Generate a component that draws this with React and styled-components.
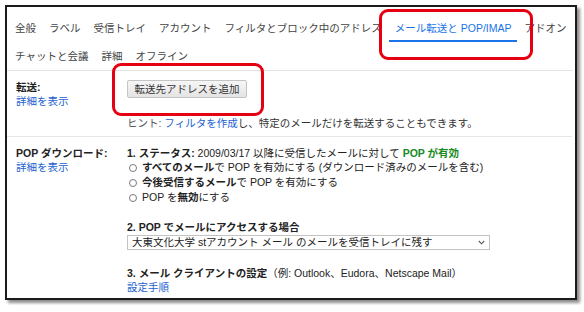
import styled, { createGlobalStyle } from 'styled-components';

const GlobalStyle = createGlobalStyle`
  body {
    margin: 0;
    background: #ffffff;
    font-family: "Liberation Sans", "Noto Sans CJK JP", sans-serif;
  }
`

const Page = styled.div`
  padding: 5px;
`

const Frame = styled.div`
  position: relative;
  width: 572px;
  height: 295px;
  box-sizing: border-box;
  border: 2px solid #1b1b1b;
  background: #ffffff;
  box-shadow: 3px 3px 3px rgba(0, 0, 0, 0.45);
  font-size: 10.5px;
  color: #222;
`

const TabBar = styled.nav`
  padding: 7px 0 0 2px;
  border-bottom: 1px solid #e4e4e4;
  margin-right: 2px;
`

const TabRow = styled.div`
  display: flex;
  gap: 1px;
`

const Tab = styled.div`
  height: 28px;
  box-sizing: border-box;
  padding: 3px 6px 0;
  line-height: 23px;
  white-space: nowrap;
  color: ${p => (p.$active ? '#1a73e8' : '#444')};
  border-bottom: 2px solid ${p => (p.$active ? '#1a73e8' : 'transparent')};
`

const Section = styled.section`
  display: grid;
  grid-template-columns: 111px 1fr;
  padding: 9px 0 ${p => p.$bottom || 0}px 9px;
  border-bottom: ${p => (p.$divider ? '1px solid #e6e6e6' : 'none')};
  margin-right: 3px;
  line-height: 14px;
`

const Label = styled.div`
  font-weight: bold;
  color: #222;
`

const Link = styled.a`
  color: #1c5fd1;
  text-decoration: none;
  display: ${p => (p.$block ? 'block' : 'inline')};
`

const Content = styled.div`
  display: flex;
  flex-direction: column;
  align-items: flex-start;
`

const Button = styled.button`
  height: 18px;
  min-width: 120px;
  padding: 0 6px;
  box-sizing: border-box;
  border: 1px solid #c4c4c4;
  border-radius: 2px;
  background: linear-gradient(#f6f6f6, #e4e4e4);
  font: inherit;
  line-height: 15px;
  color: #333;
  white-space: nowrap;
`

const Hint = styled.p`
  margin: 18px 0 0;
  color: #333;
  span.muted {
    color: #555;
  }
`

const Line = styled.div`
  margin-top: ${p => p.$gap || 0}px;
  white-space: nowrap;
  b {
    color: #222;
  }
`

const Green = styled.b`
  && {
    color: #188a1e;
  }
`

const RadioRow = styled.label`
  display: flex;
  align-items: center;
  gap: 5px;
  line-height: 15px;
  padding-left: 2px;
  white-space: nowrap;
`

const Radio = styled.span`
  width: 8px;
  height: 8px;
  box-sizing: border-box;
  border: 1px solid #7a7a7a;
  border-radius: 50%;
  background: #fff;
`

const Select = styled.div`
  margin-top: 1px;
  width: 363px;
  height: 15px;
  box-sizing: border-box;
  border: 1px solid #c3c3c3;
  display: flex;
  align-items: center;
  justify-content: space-between;
  padding: 0 4px 0 4px;
  line-height: 13px;
  color: #222;
  white-space: nowrap;
`

const Mark = styled.div`
  position: absolute;
  border: 3px solid #e50012;
  border-radius: 9px;
  pointer-events: none;
`

const tabsTop = ['全般', 'ラベル', '受信トレイ', 'アカウント', 'フィルタとブロック中のアドレス', 'メール転送と POP/IMAP', 'アドオン']
const tabsBottom = ['チャットと会議', '詳細', 'オフライン']

export default function App() {
  return (
    <>
      <GlobalStyle />
      <Page>
        <Frame>
          <TabBar>
            <TabRow>
              {tabsTop.map(t => (
                <Tab key={t} $active={t === 'メール転送と POP/IMAP'}>{t}</Tab>
              ))}
            </TabRow>
            <TabRow>
              {tabsBottom.map(t => (
                <Tab key={t}>{t}</Tab>
              ))}
            </TabRow>
          </TabBar>

          <Section $divider $bottom={6}>
            <div>
              <Label>転送:</Label>
              <Link $block href="#">詳細を表示</Link>
            </div>
            <Content>
              <Button>転送先アドレスを追加</Button>
              <Hint>
                <span className="muted">ヒント: </span>
                <Link href="#">フィルタを作成</Link>し、特定のメールだけを転送することもできます。
              </Hint>
            </Content>
          </Section>

          <Section>
            <div>
              <Label>POP ダウンロード:</Label>
              <Link $block href="#">詳細を表示</Link>
            </div>
            <Content>
              <Line>
                <b>1. ステータス:</b> 2009/03/17 以降に受信したメールに対して <Green>POP が有効</Green>
              </Line>
              <RadioRow>
                <Radio />
                <span><b>すべてのメール</b>で POP を有効にする (ダウンロード済みのメールを含む)</span>
              </RadioRow>
              <RadioRow>
                <Radio />
                <span><b>今後受信するメール</b>で POP を有効にする</span>
              </RadioRow>
              <RadioRow>
                <Radio />
                <span>POP を<b>無効</b>にする</span>
              </RadioRow>
              <Line $gap={15}>
                <b>2. POP でメールにアクセスする場合</b>
              </Line>
              <Select>
                <span>大東文化大学 stアカウント メール のメールを受信トレイに残す</span>
                <svg width="7" height="5" viewBox="0 0 7 5">
                  <path d="M0.8 1 L3.5 3.8 L6.2 1" fill="none" stroke="#555" strokeWidth="1.1" />
                </svg>
              </Select>
              <Line $gap={16}>
                <b>3. メール クライアントの設定</b>（例: Outlook、Eudora、Netscape Mail）
              </Line>
              <Link $block href="#">設定手順</Link>
            </Content>
          </Section>

          <Mark style={{ left: 372, top: 2, width: 148, height: 45 }} />
          <Mark style={{ left: 105, top: 56, width: 146, height: 47 }} />
        </Frame>
      </Page>
    </>
  )
}
